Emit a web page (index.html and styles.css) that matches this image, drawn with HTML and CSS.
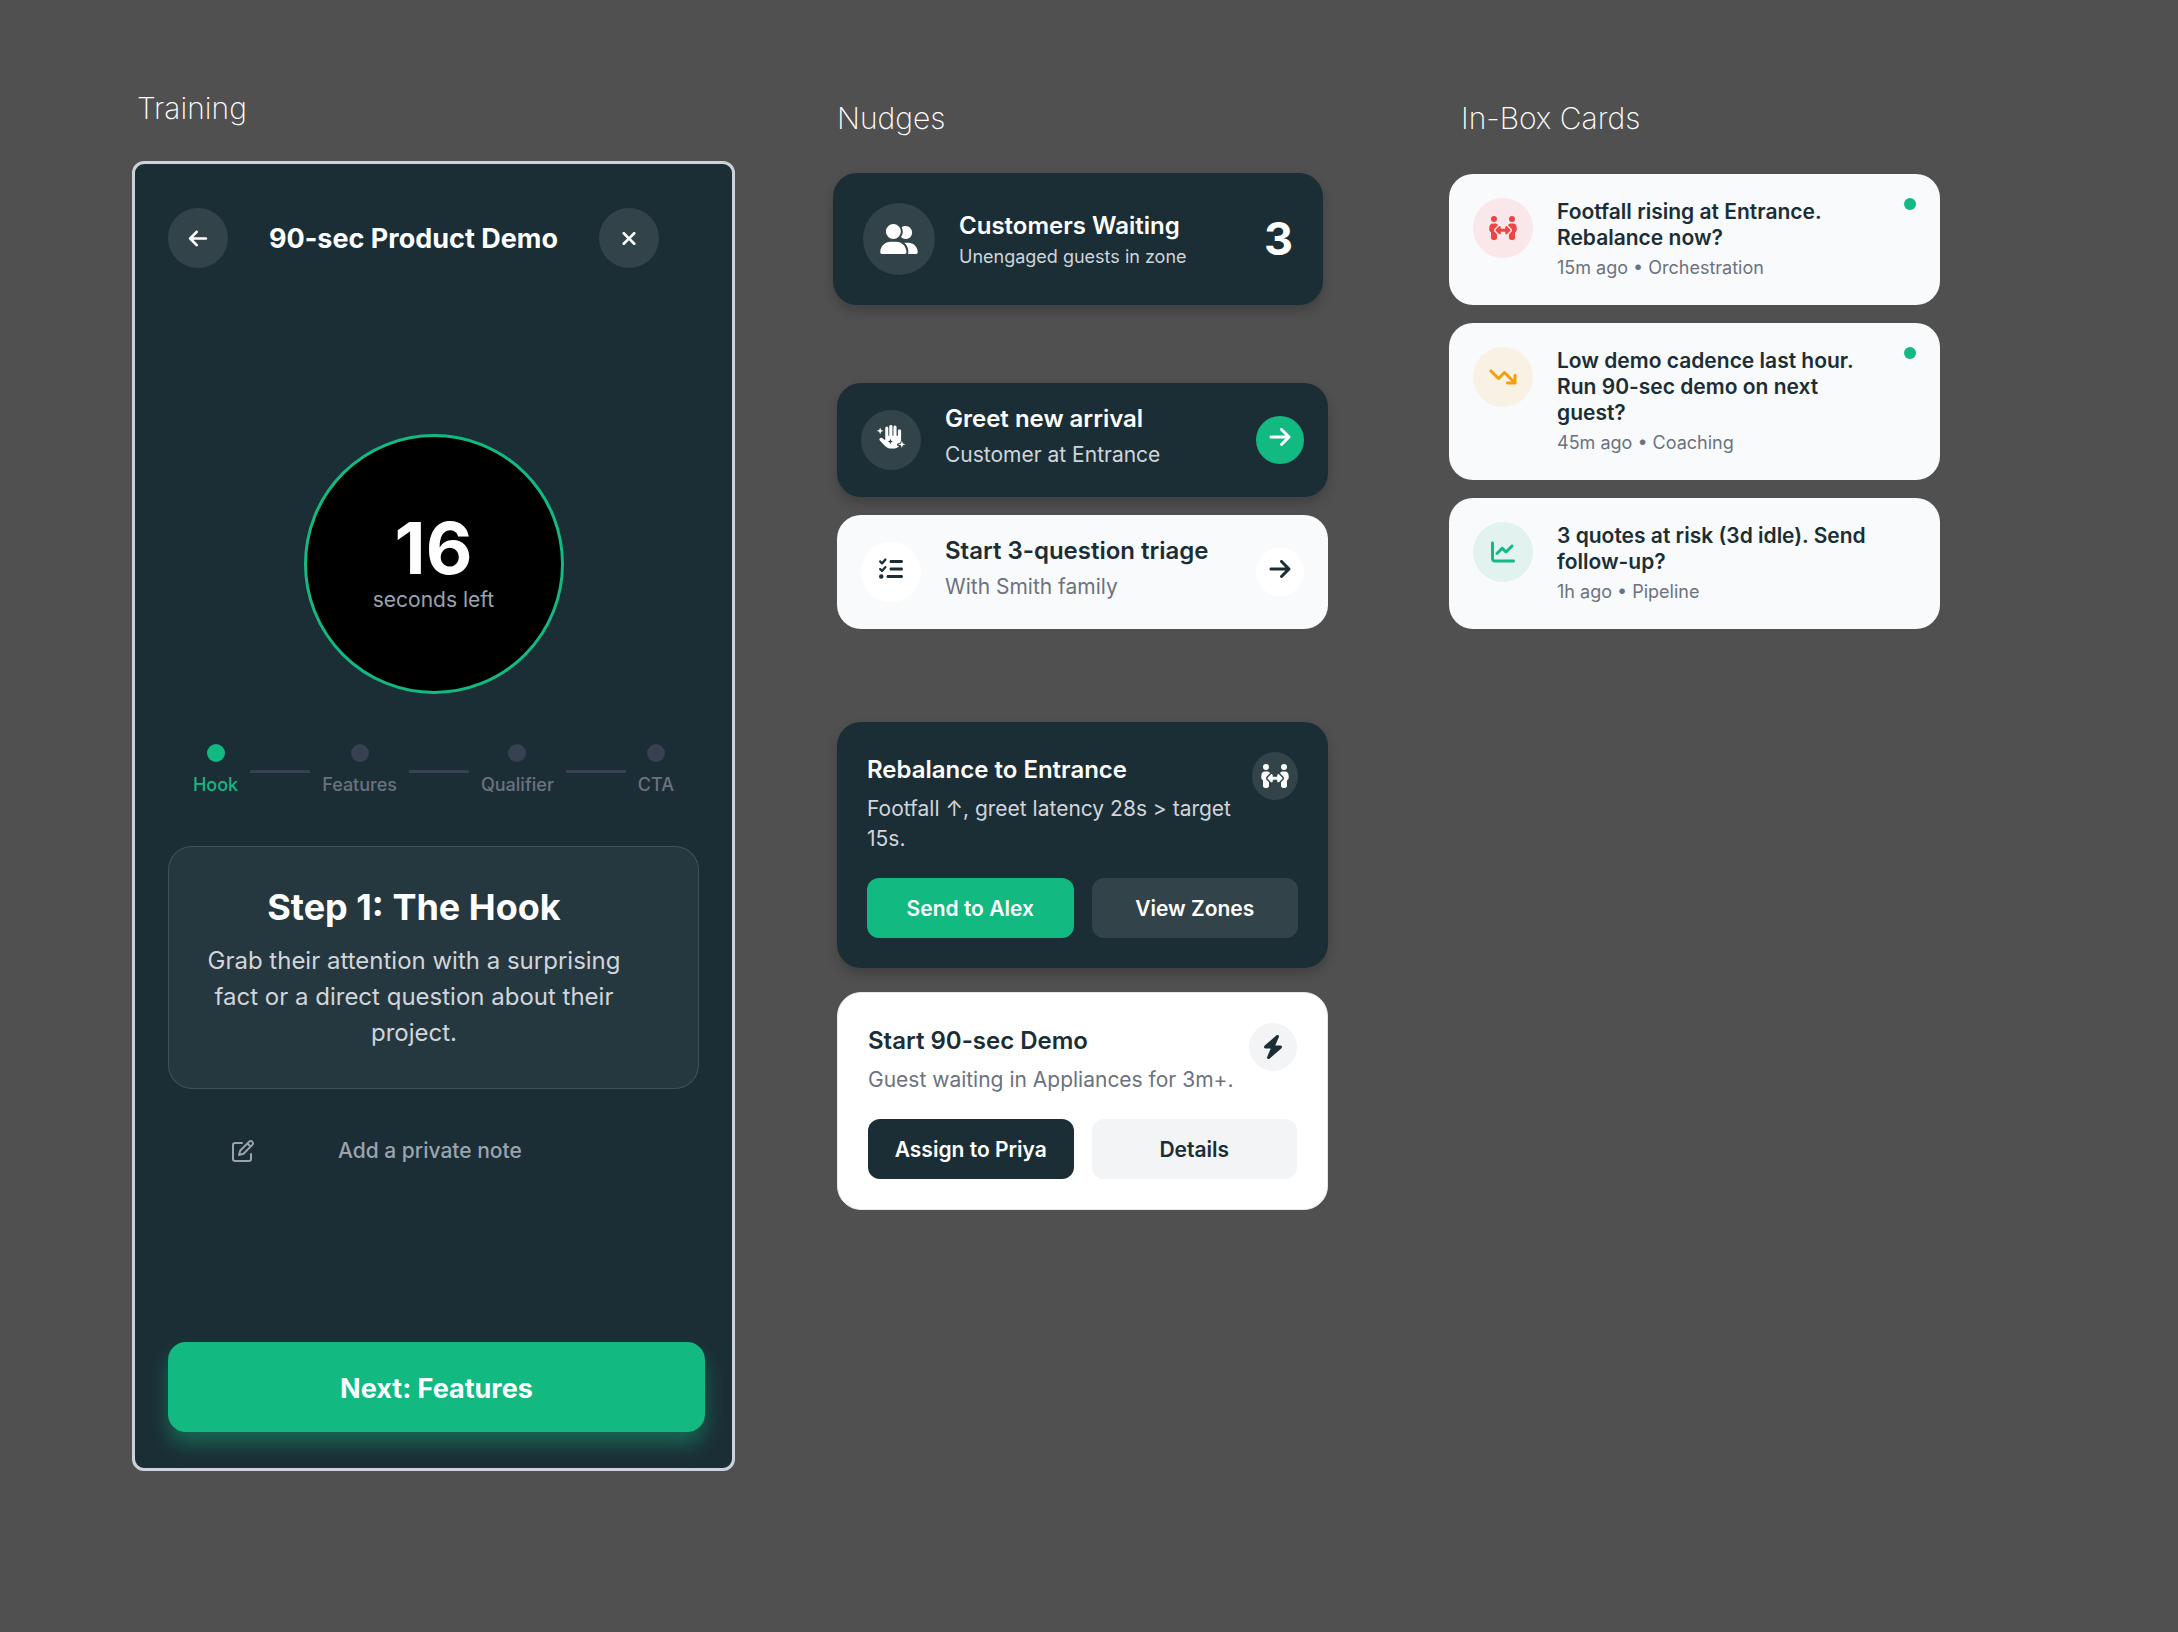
FILE: index.html
```html
<!DOCTYPE html>
<html lang="en">
<head>
<meta charset="utf-8">
<title>Training, Nudges and In-Box Cards</title>
<link rel="stylesheet" href="styles.css">
</head>
<body>
<svg class="sprite" aria-hidden="true">
  <symbol id="arrow-left" viewBox="0 0 448 512"><path d="M9.4 233.4c-12.5 12.5-12.5 32.8 0 45.3l160 160c12.5 12.5 32.8 12.5 45.3 0s12.5-32.8 0-45.3L109.2 288 416 288c17.7 0 32-14.3 32-32s-14.3-32-32-32l-306.7 0L214.6 118.6c12.5-12.5 12.5-32.8 0-45.3s-32.8-12.5-45.3 0l-160 160z"/></symbol>
  <symbol id="arrow-right" viewBox="0 0 448 512"><path d="M438.6 278.6c12.5-12.5 12.5-32.8 0-45.3l-160-160c-12.5-12.5-32.8-12.5-45.3 0s-12.5 32.8 0 45.3L338.8 224 32 224c-17.7 0-32 14.3-32 32s14.3 32 32 32l306.7 0L233.4 393.4c-12.5 12.5-12.5 32.8 0 45.3s32.8 12.5 45.3 0l160-160z"/></symbol>
  <symbol id="xmark" viewBox="0 0 384 512"><path d="M342.6 150.6c12.5-12.5 12.5-32.8 0-45.3s-32.8-12.5-45.3 0L192 210.7 86.6 105.4c-12.5-12.5-32.8-12.5-45.3 0s-12.5 32.8 0 45.3L146.7 256 41.4 361.4c-12.5 12.5-12.5 32.8 0 45.3s32.8 12.5 45.3 0L192 301.3 297.4 406.6c12.5 12.5 32.8 12.5 45.3 0s12.5-32.8 0-45.3L237.3 256 342.6 150.6z"/></symbol>
  <symbol id="bolt" viewBox="0 0 448 512"><path d="M349.4 44.6c5.9-13.7 1.5-29.7-10.6-38.5s-28.6-8-39.9 1.8l-256 224c-10 8.8-13.6 22.9-8.9 35.3S50.7 288 64 288l111.5 0L98.6 467.4c-5.9 13.7-1.5 29.7 10.6 38.5s28.6 8 39.9-1.8l256-224c10-8.8 13.6-22.9 8.9-35.3s-16.6-20.7-30-20.7l-111.5 0L349.4 44.6z"/></symbol>
  <symbol id="chart" viewBox="0 0 512 512"><path d="M64 64c0-17.7-14.3-32-32-32S0 46.3 0 64L0 400c0 44.2 35.8 80 80 80l400 0c17.7 0 32-14.3 32-32s-14.3-32-32-32L80 416c-8.8 0-16-7.2-16-16L64 64zm406.6 86.6c12.5-12.5 12.5-32.8 0-45.3s-32.8-12.5-45.3 0L320 210.7l-57.4-57.4c-12.5-12.5-32.8-12.5-45.3 0l-112 112c-12.5 12.5-12.5 32.8 0 45.3s32.8 12.5 45.3 0L240 221.3l57.4 57.4c12.5 12.5 32.8 12.5 45.3 0l128-128z"/></symbol>
  <symbol id="trend-down" viewBox="0 0 576 512"><path d="M384 352c-17.7 0-32 14.3-32 32s14.3 32 32 32l160 0c17.7 0 32-14.3 32-32l0-160c0-17.7-14.3-32-32-32s-32 14.3-32 32l0 82.7L342.6 137.4c-12.5-12.5-32.8-12.5-45.3 0L192 242.7 54.6 105.4c-12.5-12.5-32.8-12.5-45.3 0s-12.5 32.8 0 45.3l160 160c12.5 12.5 32.8 12.5 45.3 0L320 205.3 466.7 352 384 352z"/></symbol>
  <symbol id="checklist" viewBox="0 0 512 512"><path d="M152.1 38.2c9.9 8.9 10.7 24 1.8 33.9l-72 80c-4.4 4.9-10.6 7.8-17.2 7.9s-12.9-2.4-17.6-7L7 113C-2.3 103.6-2.3 88.4 7 79s24.6-9.4 33.9 0l22.1 22.1 55.1-61.2c8.9-9.9 24-10.7 33.9-1.8zm0 160c9.9 8.9 10.7 24 1.8 33.9l-72 80c-4.4 4.9-10.6 7.8-17.2 7.9s-12.9-2.4-17.6-7L7 273c-9.4-9.4-9.4-24.6 0-33.9s24.6-9.4 33.9 0l22.1 22.1 55.1-61.2c8.9-9.9 24-10.7 33.9-1.8zM224 96c0-17.7 14.3-32 32-32l224 0c17.7 0 32 14.3 32 32s-14.3 32-32 32l-224 0c-17.7 0-32-14.3-32-32zm0 160c0-17.7 14.3-32 32-32l224 0c17.7 0 32 14.3 32 32s-14.3 32-32 32l-224 0c-17.7 0-32-14.3-32-32zM160 416c0-17.7 14.3-32 32-32l288 0c17.7 0 32 14.3 32 32s-14.3 32-32 32l-288 0c-17.7 0-32-14.3-32-32zM48 368a48 48 0 1 1 0 96 48 48 0 1 1 0-96z"/></symbol>
  <symbol id="users" viewBox="0 0 640 512"><path d="M96 128a128 128 0 1 1 256 0A128 128 0 1 1 96 128zM0 482.3C0 383.8 79.8 304 178.3 304l91.4 0C368.2 304 448 383.8 448 482.3c0 16.4-13.3 29.7-29.7 29.7L29.7 512C13.3 512 0 498.7 0 482.3zM609.3 512l-137.8 0c5.4-9.4 8.6-20.3 8.6-32l0-8c0-60.7-27.1-115.2-69.8-151.8c2.4-.1 4.7-.2 7.1-.2l61.4 0C567.8 320 640 392.2 640 481.3c0 17-13.8 30.7-30.7 30.7zM432 256c-31 0-59-12.6-79.3-32.9C372.4 196.5 384 163.6 384 128c0-26.8-6.6-52.1-18.3-74.3C384.3 40.1 407.2 32 432 32c61.9 0 112 50.1 112 112s-50.1 112-112 112z"/></symbol>
  <symbol id="people-arrows" viewBox="0 0 640 512"><path d="M64 64a64 64 0 1 1 128 0A64 64 0 1 1 64 64zM105.6 160l44.8 0c27 0 51 13.4 65.5 34.1c-2.7 1.9-5.2 4-7.5 6.3l-64 64c-21.9 21.9-21.9 57.3 0 79.2L192 391.2l0 72.8c0 26.5-21.5 48-48 48l-32 0c-26.5 0-48-21.5-48-48l0-115.200c-24.400-14.100-39.900-41.700-37.600-70.800l3.700-44.700C33.300 191.900 64 160 105.600 160zM448 64a64 64 0 1 1 128 0A64 64 0 1 1 448 64zM534.400 160c41.600 0 72.200 31.900 75.500 73.300l3.700 44.700c2.300 29.100-13.200 56.700-37.600 70.800l0 115.200c0 26.500-21.500 48-48 48l-32 0c-26.500 0-48-21.500-48-48l0-72.800 47.600-47.600c21.900-21.900 21.900-57.300 0-79.200l-64-64c-2.300-2.300-4.900-4.400-7.500-6.300C438.600 173.400 462.600 160 489.600 160l44.800 0zM272 240l0 32 96 0 0-32c0-9.700 5.800-18.500 14.800-22.200s19.300-1.700 26.200 5.200l64 64c9.400 9.400 9.400 24.600 0 33.900l-64 64c-6.900 6.900-17.200 8.900-26.200 5.200s-14.800-12.500-14.800-22.200l0-32-96 0 0 32c0 9.700-5.800 18.500-14.800 22.200s-19.300 1.700-26.200-5.200l-64-64c-9.400-9.400-9.400-24.600 0-33.900l64-64c6.900-6.900 17.200-8.900 26.200-5.200s14.800 12.500 14.800 22.200z"/></symbol>
  <symbol id="hand" viewBox="0 0 30 25"><path fill-rule="evenodd" d="M9 3.200a1.600 1.600 0 0 1 3.200 0V11.200h1V1.600a1.600 1.600 0 0 1 3.300 0V11.200h1V2.300a1.600 1.600 0 0 1 3.300 0V11.200h1.400V6.200a1.600 1.600 0 0 1 3.300 0V16l-1 2.600-2.800 1c-.8.400-.8 1.300 0 1.700l1.700.8c-1.500 1.600-3.700 2.500-6.200 2.500h-1.400c-3 0-5.200-1-7.300-3L3.400 16.200C2 14.600 4 12.400 5.700 13.600L9 16zM14.400 14.400l-.8 2-2 .8 2 .8.8 2 .8-2 2-.8-2-.8z"/><path d="M3.700 2.500l1 2.600 2.600 1-2.600 1-1 2.600-1-2.600-2.600-1 2.600-1zM26.300 16.500l1 2.700 2.700 1-2.700 1-1 2.800-1-2.800-2.700-1 2.700-1z"/></symbol>
  <symbol id="edit" viewBox="0 0 24 24"><path fill="none" stroke="currentColor" stroke-width="2" stroke-linecap="round" stroke-linejoin="round" d="M11 4H4a2 2 0 0 0-2 2v14a2 2 0 0 0 2 2h14a2 2 0 0 0 2-2v-5M18.400 2.400a2.300 2.300 0 0 1 3.200 3.200L12.500 14.700 8 16l1.300-4.500zM16.500 4.500l3 3"/></symbol>
</svg>

<main class="board">
  <section class="column training">
    <h2 class="label">Training</h2>
    <div class="phone">
      <header class="phone-header">
        <button class="circle" type="button" aria-label="Back"><svg class="icon-21"><use href="#arrow-left"/></svg></button>
        <h1 class="phone-title">90-sec Product Demo</h1>
        <button class="circle" type="button" aria-label="Close"><svg class="icon-21"><use href="#xmark"/></svg></button>
      </header>
      <div class="timer">
        <span class="timer-value">16</span>
        <span class="timer-unit">seconds left</span>
      </div>
      <ol class="steps">
        <li class="step active">Hook</li>
        <li class="rule" aria-hidden="true"></li>
        <li class="step">Features</li>
        <li class="rule" aria-hidden="true"></li>
        <li class="step">Qualifier</li>
        <li class="rule" aria-hidden="true"></li>
        <li class="step">CTA</li>
      </ol>
      <article class="lesson">
        <h3 class="lesson-title">Step 1: The Hook</h3>
        <p class="lesson-text">Grab their attention with a surprising fact or a direct question about their project.</p>
      </article>
      <button class="note" type="button"><svg class="icon-24"><use href="#edit"/></svg>Add a private note</button>
      <button class="next" type="button">Next: Features</button>
    </div>
  </section>

  <section class="column nudges">
    <h2 class="label">Nudges</h2>
    <article class="card dark stat">
      <span class="circle large"><svg class="icon-30"><use href="#users"/></svg></span>
      <div class="grow">
        <h3 class="card-title">Customers Waiting</h3>
        <p class="stat-note">Unengaged guests in zone</p>
      </div>
      <strong class="stat-value">3</strong>
    </article>

    <div class="stack">
      <article class="card dark nudge">
        <span class="circle raised"><svg class="icon-24"><use href="#hand"/></svg></span>
        <div class="grow nudge-text">
          <h3 class="card-title">Greet new arrival</h3>
          <p class="card-text">Customer at Entrance</p>
        </div>
        <button class="go green" type="button" aria-label="Greet"><svg class="icon-24"><use href="#arrow-right"/></svg></button>
      </article>
      <article class="card light nudge">
        <span class="circle raised"><svg class="icon-24"><use href="#checklist"/></svg></span>
        <div class="grow nudge-text">
          <h3 class="card-title">Start 3-question triage</h3>
          <p class="card-text">With Smith family</p>
        </div>
        <button class="go" type="button" aria-label="Start triage"><svg class="icon-24"><use href="#arrow-right"/></svg></button>
      </article>
    </div>

    <div class="stack actions">
      <article class="card dark action">
        <div class="action-head">
          <div class="grow">
            <h3 class="card-title">Rebalance to Entrance</h3>
            <p class="card-text">Footfall ↑, greet latency 28s &gt; target 15s.</p>
          </div>
          <span class="circle narrow"><svg class="icon-24"><use href="#people-arrows"/></svg></span>
        </div>
        <div class="buttons">
          <button class="button green" type="button">Send to Alex</button>
          <button class="button" type="button">View Zones</button>
        </div>
      </article>
      <article class="card white action">
        <div class="action-head">
          <div class="grow">
            <h3 class="card-title">Start 90-sec Demo</h3>
            <p class="card-text">Guest waiting in Appliances for 3m+.</p>
          </div>
          <span class="circle small"><svg class="icon-24"><use href="#bolt"/></svg></span>
        </div>
        <div class="buttons">
          <button class="button navy" type="button">Assign to Priya</button>
          <button class="button" type="button">Details</button>
        </div>
      </article>
    </div>
  </section>

  <section class="column inbox">
    <h2 class="label">In-Box Cards</h2>
    <div class="stack">
      <article class="card light message">
        <span class="circle red"><svg class="icon-24"><use href="#people-arrows"/></svg></span>
        <div class="grow">
          <h3 class="message-title">Footfall rising at Entrance. Rebalance now?</h3>
          <p class="message-meta">15m ago • Orchestration</p>
        </div>
        <span class="unread"></span>
      </article>
      <article class="card light message">
        <span class="circle amber"><svg class="icon-24"><use href="#trend-down"/></svg></span>
        <div class="grow">
          <h3 class="message-title">Low demo cadence last hour. Run 90-sec demo on next guest?</h3>
          <p class="message-meta">45m ago • Coaching</p>
        </div>
        <span class="unread"></span>
      </article>
      <article class="card light message">
        <span class="circle mint"><svg class="icon-24"><use href="#chart"/></svg></span>
        <div class="grow">
          <h3 class="message-title">3 quotes at risk (3d idle). Send follow-up?</h3>
          <p class="message-meta">1h ago • Pipeline</p>
        </div>
      </article>
    </div>
  </section>
</main>
</body>
</html>
```

FILE: styles.css
```css
:root {
  --navy: #1b2e35;
  --green: #12b981;
  --grey: #6b7280;
  --silver: #d1d5db;
}

* {
  box-sizing: border-box;
}

body {
  margin: 0;
  min-height: 100vh;
  background: #505050;
  color: #fff;
  font-family: Inter, "Liberation Sans", sans-serif;
}

h1, h2, h3, p, ol {
  margin: 0;
  padding: 0;
}

button {
  border: 0;
  padding: 0;
  color: inherit;
  font-family: inherit;
  cursor: pointer;
}

.sprite {
  display: none;
}

svg {
  fill: currentColor;
}

.icon-21 { width: 24px; height: 21px; }
.icon-24 { width: 30px; height: 24px; }
.icon-30 { width: 38px; height: 30px; }

.board {
  display: grid;
  grid-template-columns: 603fr 495fr 514fr;
  column-gap: 98px;
  padding: 88px 238px 87px 132px;
  align-items: start;
}

.column {
  min-width: 0;
}

.label {
  font-size: 30px;
  line-height: 40px;
  font-weight: 200;
}

/* Training */

.training .label {
  margin: 0 0 33px 5px;
}

.phone {
  display: flex;
  flex-direction: column;
  padding: 44px 27px 36px 33px;
  border: 3px solid #cbd2db;
  border-radius: 12px;
  background: var(--navy);
}

.phone-header {
  display: flex;
  align-items: center;
  justify-content: space-between;
  margin-right: 46px;
}

.phone-title {
  padding-top: 2px;
  font-size: 27px;
  line-height: 42px;
  font-weight: 700;
}

.circle {
  flex: none;
  display: flex;
  align-items: center;
  justify-content: center;
  width: 60px;
  height: 60px;
  border-radius: 50%;
  background: rgba(255, 255, 255, .1);
}

.circle.large { width: 72px; height: 72px; }
.circle.small { width: 48px; height: 48px; }
.circle.narrow { width: 46px; height: 48px; }
.circle.raised { padding-bottom: 6px; }

.timer {
  align-self: center;
  display: flex;
  flex-direction: column;
  align-items: center;
  justify-content: center;
  width: 260px;
  height: 260px;
  margin: 166px 6px 50px 0;
  border: 3px solid var(--green);
  border-radius: 50%;
  background: #000;
}

.timer-value {
  font-size: 72px;
  line-height: 72px;
  font-weight: 700;
}

.timer-unit {
  font-size: 21px;
  line-height: 32px;
  color: #9ca3af;
}

.steps {
  display: flex;
  align-items: center;
  justify-content: center;
  gap: 12px;
  margin-right: 6px;
  list-style: none;
}

.step {
  display: flex;
  flex-direction: column;
  align-items: center;
  gap: 9px;
  font-size: 18px;
  line-height: 28px;
  font-weight: 500;
  color: var(--grey);
}

.step::before {
  content: "";
  width: 18px;
  height: 18px;
  border-radius: 50%;
  background: #374151;
}

.step.active {
  color: var(--green);
}

.step.active::before {
  background: var(--green);
}

.rule {
  width: 60px;
  height: 3px;
  background: #374151;
}

.lesson {
  margin: 47px 6px 46px 0;
  padding: 34px 36px 37px;
  border: 1px solid rgba(255, 255, 255, .12);
  border-radius: 24px;
  background: rgba(255, 255, 255, .05);
  text-align: center;
}

.lesson-title,
.lesson-text {
  max-width: 418px;
}

.lesson-title {
  margin-bottom: 9px;
  font-size: 36px;
  line-height: 53px;
  font-weight: 700;
}

.lesson-text {
  font-size: 24px;
  line-height: 36px;
  color: var(--silver);
}

.note {
  display: flex;
  align-items: center;
  gap: 80px;
  margin: 0 6px 175px 60px;
  background: none;
  font-size: 21px;
  line-height: 32px;
  font-weight: 500;
  color: #9ca3af;
}

.next {
  height: 90px;
  padding-top: 2px;
  border-radius: 18px;
  background: var(--green);
  box-shadow: 0 12px 20px rgba(18, 185, 129, .4);
  font-size: 27px;
  font-weight: 700;
}

/* Nudges */

.nudges,
.inbox {
  padding-top: 10px;
}

.nudges .label {
  margin: 0 0 35px 4px;
}

.card {
  border-radius: 24px;
}

.dark {
  background: var(--navy);
  box-shadow: 0 6px 12px rgba(0, 0, 0, .2);
}

.light {
  background: #f9fafb;
  color: var(--navy);
}

.white {
  border: 1px solid #e5e7eb;
  background: #fff;
  color: var(--navy);
}

.grow {
  flex: 1;
  min-width: 0;
}

.card-title {
  font-size: 24px;
  line-height: 36px;
  font-weight: 600;
}

.card-text {
  font-size: 21px;
  line-height: 30px;
  color: var(--grey);
}

.dark .card-text,
.stat-note {
  color: var(--silver);
}

.stat {
  display: flex;
  align-items: center;
  gap: 24px;
  margin-right: 5px;
  padding: 30px;
}

.stat-note {
  font-size: 18px;
  line-height: 26px;
}

.stat-value {
  font-size: 45px;
  line-height: 60px;
}

.stack {
  display: flex;
  flex-direction: column;
  gap: 18px;
}

.nudges .stack {
  margin: 78px 0 0 4px;
}

.nudges .actions {
  gap: 24px;
  margin-top: 93px;
}

.nudge {
  display: flex;
  align-items: center;
  gap: 24px;
  padding: 18px 24px;
}

.nudge-text {
  padding-bottom: 6px;
}

.nudge-text .card-text {
  line-height: 36px;
}

.light .circle,
.go {
  background: #fff;
}

.go {
  flex: none;
  display: flex;
  align-items: center;
  justify-content: center;
  width: 48px;
  height: 48px;
  padding-bottom: 6px;
  border-radius: 50%;
}

.go.green {
  background: var(--green);
}

.action {
  padding: 30px;
}

.action-head {
  display: flex;
  align-items: flex-start;
  margin-bottom: 24px;
}

.action .card-text {
  margin-top: 6px;
}

.buttons {
  display: grid;
  grid-template-columns: 1fr 1fr;
  gap: 18px;
}

.button {
  height: 60px;
  border-radius: 12px;
  background: rgba(255, 255, 255, .1);
  font-size: 21px;
  font-weight: 600;
}

.button.green {
  background: var(--green);
}

.white .circle,
.white .button {
  background: #f3f4f6;
}

.white .button.navy {
  background: var(--navy);
  color: #fff;
}

/* In-Box */

.inbox {
  padding-left: 23px;
}

.inbox .label {
  margin: 0 0 36px 12px;
}

.message {
  display: flex;
  align-items: flex-start;
  gap: 24px;
  padding: 24px;
}

.message-title {
  padding-top: 1px;
  margin-bottom: 3px;
  font-size: 21px;
  line-height: 26px;
  font-weight: 600;
}

.message-meta {
  font-size: 18px;
  line-height: 27px;
  color: var(--grey);
}

.unread {
  flex: none;
  width: 12px;
  height: 12px;
  border-radius: 50%;
  background: var(--green);
}

.light .circle.red {
  background: #fae7e9;
  color: #ef4444;
}

.light .circle.amber {
  background: #f9f1e4;
  color: #f59e0b;
}

.light .circle.mint {
  background: #e2f3ef;
  color: var(--green);
}
```
